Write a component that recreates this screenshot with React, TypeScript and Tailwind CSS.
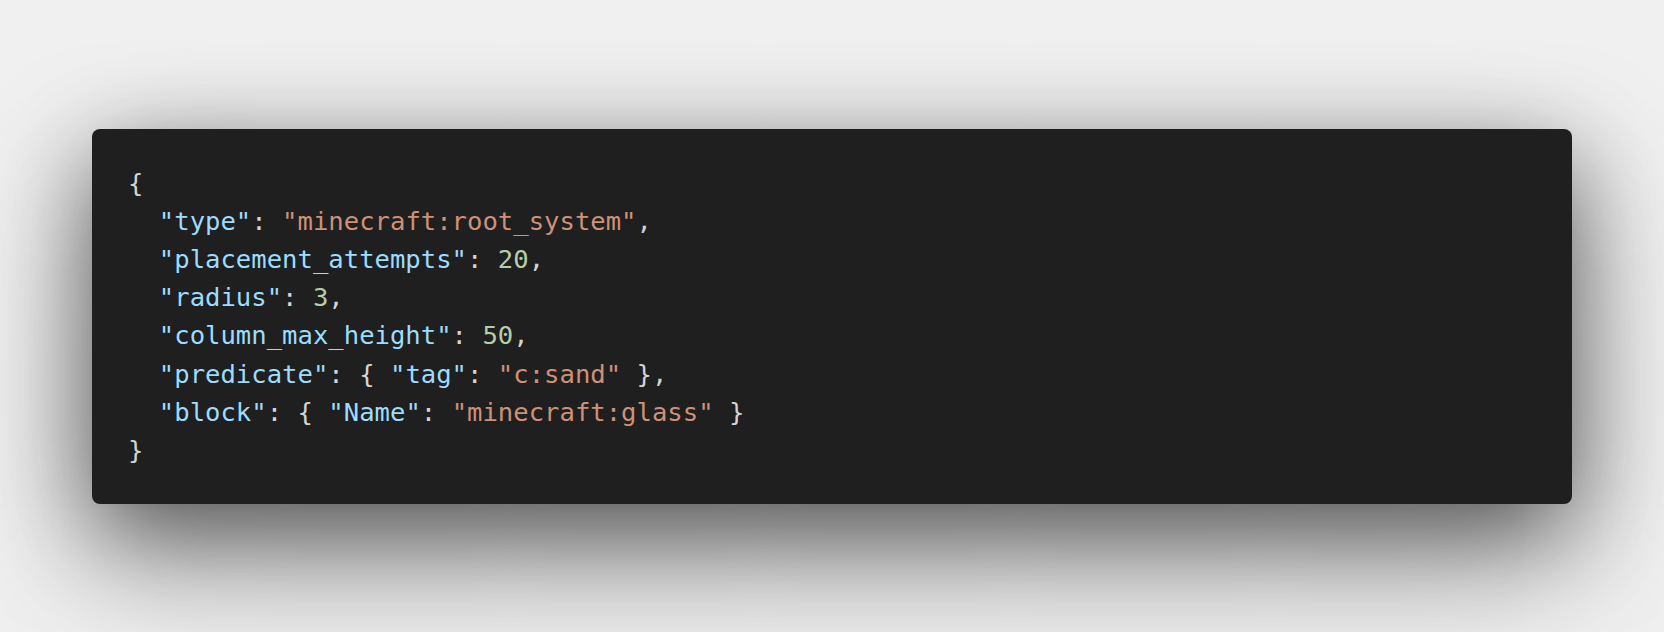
const KEY = "text-[#9cdcfe]";
const STR = "text-[#ce9178]";
const NUM = "text-[#b5cea8]";
const PUN = "text-[#d4d4d4]";

type Tok = [string, string];

const LINES: Tok[][] = [
  [[PUN, "{"]],
  [[PUN, "  "], [KEY, "\"type\""], [PUN, ": "], [STR, "\"minecraft:root_system\""], [PUN, ","]],
  [[PUN, "  "], [KEY, "\"placement_attempts\""], [PUN, ": "], [NUM, "20"], [PUN, ","]],
  [[PUN, "  "], [KEY, "\"radius\""], [PUN, ": "], [NUM, "3"], [PUN, ","]],
  [[PUN, "  "], [KEY, "\"column_max_height\""], [PUN, ": "], [NUM, "50"], [PUN, ","]],
  [[PUN, "  "], [KEY, "\"predicate\""], [PUN, ": { "], [KEY, "\"tag\""], [PUN, ": "], [STR, "\"c:sand\""], [PUN, " },"]],
  [[PUN, "  "], [KEY, "\"block\""], [PUN, ": { "], [KEY, "\"Name\""], [PUN, ": "], [STR, "\"minecraft:glass\""], [PUN, " }"]],
  [[PUN, "}"]],
];

export default function App() {
  return (
    <div className="min-h-screen bg-[#f0f0f0] flex items-center justify-center">
      <div className="w-[1480px] h-[375px] rounded-lg bg-[#1f1f1f] px-[36px] pt-[35px] shadow-[0_30px_100px_rgba(0,0,0,0.6),0_70px_160px_rgba(0,0,0,0.18)]">
        <pre className="font-['DejaVu_Sans_Mono',monospace] text-[25.6px] leading-[38.2px] m-0">
          {LINES.map((line, i) => (
            <div key={i}>
              {line.map(([cls, text], j) => (
                <span key={j} className={cls}>
                  {text}
                </span>
              ))}
            </div>
          ))}
        </pre>
      </div>
    </div>
  );
}
